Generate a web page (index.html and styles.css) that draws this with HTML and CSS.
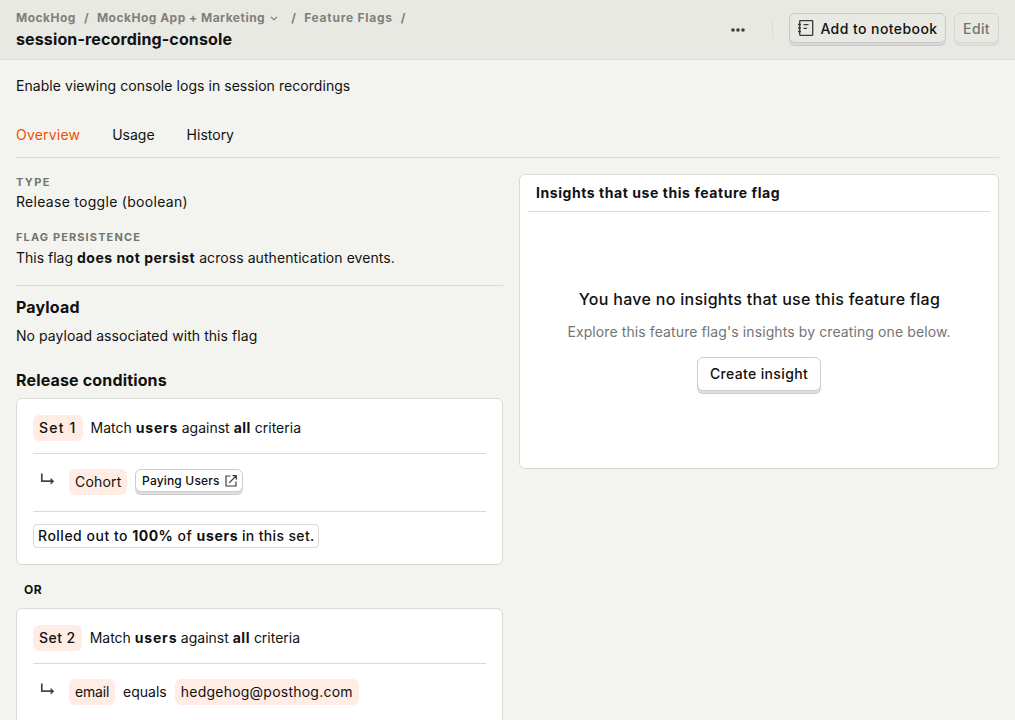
FILE: index.html
```html
<!DOCTYPE html>
<html lang="en">
<head>
<meta charset="utf-8">
<title>session-recording-console</title>
<link rel="stylesheet" href="styles.css">
</head>
<body>
<header class="topbar">
  <div class="heading">
    <nav class="crumbs">
      <a>MockHog</a><span class="sep">/</span>
      <a>MockHog App + Marketing<svg class="chevron" width="12" height="12" viewBox="0 0 12 12"><path d="M3 5l3 2.700L9 5" fill="none" stroke="currentColor" stroke-width="1.100"/></svg></a><span class="sep">/</span>
      <a class="crumb-flags">Feature Flags</a><span class="sep">/</span>
    </nav>
    <h1 class="title">session-recording-console</h1>
  </div>
  <div class="actions">
    <svg class="more" width="16" height="16" viewBox="0 0 16 16" fill="#3d3e3b"><circle cx="3" cy="8" r="1.800"/><circle cx="8" cy="8" r="1.800"/><circle cx="13" cy="8" r="1.800"/></svg>
    <span class="divider"></span>
    <button class="btn btn-notebook">
      <svg width="18" height="18" viewBox="0 0 18 18" fill="none" stroke="#3b3c39"><rect x="2.700" y="1.600" width="13" height="14.700" rx=".5" stroke-width="1.300"/><path d="M1 5.500h3M1 9h3M1 12.500h3" stroke-width="1.300"/><path d="M6.500 5.700h5M6.500 9.300h3.500" stroke-width="1.200"/></svg>
      Add to notebook
    </button>
    <button class="btn btn-edit" disabled>Edit</button>
  </div>
</header>
<main class="content">
  <p class="description">Enable viewing console logs in session recordings</p>
  <nav class="tabs"><a class="tab active">Overview</a><a class="tab">Usage</a><a class="tab">History</a></nav>
  <div class="columns">
    <section class="details">
      <div class="label label-type">Type</div>
      <p class="type-value">Release toggle (boolean)</p>
      <div class="label">Flag persistence</div>
      <p class="persistence-value">This flag <b>does not persist</b><span class="loose"> across authentication events.</span></p>
      <h2 class="section-title payload-title">Payload</h2>
      <p class="payload-value">No payload associated with this flag</p>
      <h2 class="section-title">Release conditions</h2>
      <div class="card condition">
        <div class="match"><span class="chip set set-first">Set 1</span><span>Match <b class="who">users</b> against <b>all</b> criteria</span></div>
        <div class="rule">
          <svg class="elbow" width="20" height="20" viewBox="0 0 20 20"><path d="M3.800 2.500v7.700h10.500" fill="none" stroke="#444" stroke-width="1.700"/><path d="M12.600 6.700l3.600 3.500-3.600 3.500z" fill="#444"/></svg>
          <span class="chip cohort">Cohort</span>
          <button class="btn btn-small">Paying Users<svg width="14" height="14" viewBox="0 0 14 14" fill="none" stroke="#3b3c39" stroke-width="1.200"><path d="M6.500 2H2v10h10V7.500M8.500 1.700h3.800v3.800M12 2L5.200 8.800"/></svg></button>
        </div>
        <div class="rollout"><span class="rollout-tag">Rolled out to <b>100%</b> of <b class="who">users</b><span class="set-note"> in this set.</span></span></div>
      </div>
      <div class="or">OR</div>
      <div class="card condition">
        <div class="match"><span class="chip set">Set 2</span><span>Match <b class="who">users</b> against <b>all</b> criteria</span></div>
        <div class="rule">
          <svg class="elbow" width="20" height="20" viewBox="0 0 20 20"><path d="M3.800 2.500v7.700h10.500" fill="none" stroke="#444" stroke-width="1.700"/><path d="M12.600 6.700l3.600 3.500-3.600 3.500z" fill="#444"/></svg>
          <span class="chip property">email</span><span>equals</span><span class="chip value">hedgehog@posthog.com</span>
        </div>
      </div>
    </section>
    <aside class="card insights">
      <h3 class="insights-title">Insights that use this feature flag</h3>
      <div class="empty">
        <h2 class="empty-title">You have no insights that use this feature flag</h2>
        <p class="empty-text">Explore this feature flag's insights by creating one below.</p>
        <button class="btn btn-create">Create insight</button>
      </div>
    </aside>
  </div>
</main>
</body>
</html>
```
FILE: styles.css
```css
* { box-sizing: border-box; margin: 0; padding: 0; }
body {
  height: 720px;
  overflow: hidden;
  background: #f3f4ef;
  color: #111;
  font: 14px/20px Inter, sans-serif;
}
b { font-weight: 700; letter-spacing: .5px; }
svg { display: block; flex: none; }
.topbar {
  display: flex;
  justify-content: space-between;
  height: 60px;
  padding: 0 16px;
  background: #e8e9e3;
  border-bottom: 1px solid #e0e1db;
}
.heading { padding-top: 10px; }
.crumbs {
  display: flex;
  gap: 8px;
  color: #7f807b;
  font-size: 12px;
  font-weight: 700;
  line-height: 16px;
  letter-spacing: .49px;
}
.crumbs a { display: flex; align-items: center; }
.crumb-flags { letter-spacing: .74px; }
.sep { width: 5px; }
.chevron { margin: 0 3px 0 3px; }
.title { margin-top: 1px; font-size: 16px; font-weight: 700; line-height: 24px; letter-spacing: .13px; }
.actions { display: flex; padding-top: 13px; }
.more { margin: 9px 26px 0 0; }
.divider { width: 1px; height: 17px; margin: 8px 16px 0 0; background: #dcddd7; }
.btn {
  display: flex;
  align-items: center;
  justify-content: center;
  border: 1px solid #ccc;
  border-radius: 6px;
  background: #fff;
  box-shadow: 0 2px 0 #dedede, 0 3px 0 #ccc;
  color: #111;
  font: 500 14px/20px Inter, sans-serif;
  letter-spacing: .35px;
  white-space: nowrap;
}
.btn-notebook {
  width: 157px;
  height: 30px;
  gap: 5px;
  margin-right: 8px;
  padding-top: 2px;
  background: #e8e9e3;
  border-color: #c9c8c8;
  box-shadow: 0 2px 0 #dad9da, 0 3px 0 #c9c8c8;
  letter-spacing: .43px;
}
.btn-notebook svg { margin-top: -2px; }
.btn-edit {
  width: 45px;
  height: 30px;
  padding-top: 2px;
  background: #e8e9e3;
  border-color: #d6d6d3;
  box-shadow: 0 2px 0 #dfdfdc, 0 3px 0 #d6d6d3;
  color: #73746f;
}
.content { padding: 0 16px; }
.description { padding-top: 16px; letter-spacing: .05px; }
.tabs {
  display: flex;
  gap: 32px;
  height: 46px;
  margin-top: 16px;
  padding-top: 13px;
  border-bottom: 1px solid #dadbd4;
}
.tab { letter-spacing: 0; }
.tab.active { color: #f54e00; letter-spacing: .2px; }
.columns { display: flex; gap: 16px; align-items: flex-start; padding-top: 16px; }
.details { width: 487px; }
.label {
  color: #73746f;
  font-size: 11px;
  font-weight: 700;
  line-height: 16px;
  letter-spacing: 1.12px;
  text-transform: uppercase;
}
.label-type { letter-spacing: 1.4px; }
.type-value { padding: 2px 0 17px; letter-spacing: .29px; }
.persistence-value { height: 40px; padding-top: 3px; }
.loose { letter-spacing: .07px; }
.payload-title { padding-top: 9px; border-top: 1px solid #dadbd4; }
.section-title { font-size: 16px; line-height: 24px; font-weight: 700; letter-spacing: .16px; }
.payload-value { padding: 7px 0 22px; letter-spacing: .06px; }
.card { background: #fff; border: 1px solid #dadbd4; border-radius: 6px; }
.condition { height: 167px; margin-top: 6px; padding: 16px; }
.who { letter-spacing: .8px; margin-right: -.4px; }
.match { display: flex; gap: 8px; height: 39px; border-bottom: 1px solid #dadbd4; line-height: 26px; }
.chip { height: 26px; padding: 0 6px; border-radius: 6px; background: #ffece4; line-height: 26px; }
.set { font-weight: 500; letter-spacing: .45px; }
.set-first { letter-spacing: 1.2px; }
.cohort { letter-spacing: .17px; }
.property { letter-spacing: -.2px; }
.value { letter-spacing: .23px; }
.rule { display: flex; gap: 8px; height: 58px; padding: 15px 0 0 4px; border-bottom: 1px solid #dadbd4; line-height: 26px; }
.elbow { margin: 2px 3px 0 1px; }
.btn-small { width: 108px; height: 23px; gap: 4px; padding-left: 1px; font-size: 12px; line-height: 16px; letter-spacing: .17px; }
.rollout { padding-top: 12px; }
.rollout-tag {
  display: inline-block;
  height: 24px;
  padding: 0 3px 0 4px;
  border: 1px solid #dadbd4;
  border-radius: 4px;
  font-weight: 500;
  line-height: 22px;
  letter-spacing: .5px;
}
.rollout-tag .who { letter-spacing: .65px; }
.set-note { letter-spacing: .35px; }
.or { padding: 17px 8px 4px; font-size: 12px; line-height: 16px; font-weight: 700; letter-spacing: .4px; }
.insights { width: 480px; height: 295px; padding: 0 8px; }
.insights-title {
  height: 37px;
  padding: 8px 8px 0;
  border-bottom: 1px solid #dadbd4;
  font-size: 14px;
  font-weight: 700;
  letter-spacing: .56px;
}
.empty { display: flex; flex-direction: column; align-items: center; padding-top: 75px; }
.empty-title { padding-left: 1px; font-size: 16px; font-weight: 500; line-height: 24px; letter-spacing: .29px; }
.empty-text { margin: 11px 0 15px; color: #747474; letter-spacing: .1px; }
.btn-create { width: 124px; height: 34px; }
```
